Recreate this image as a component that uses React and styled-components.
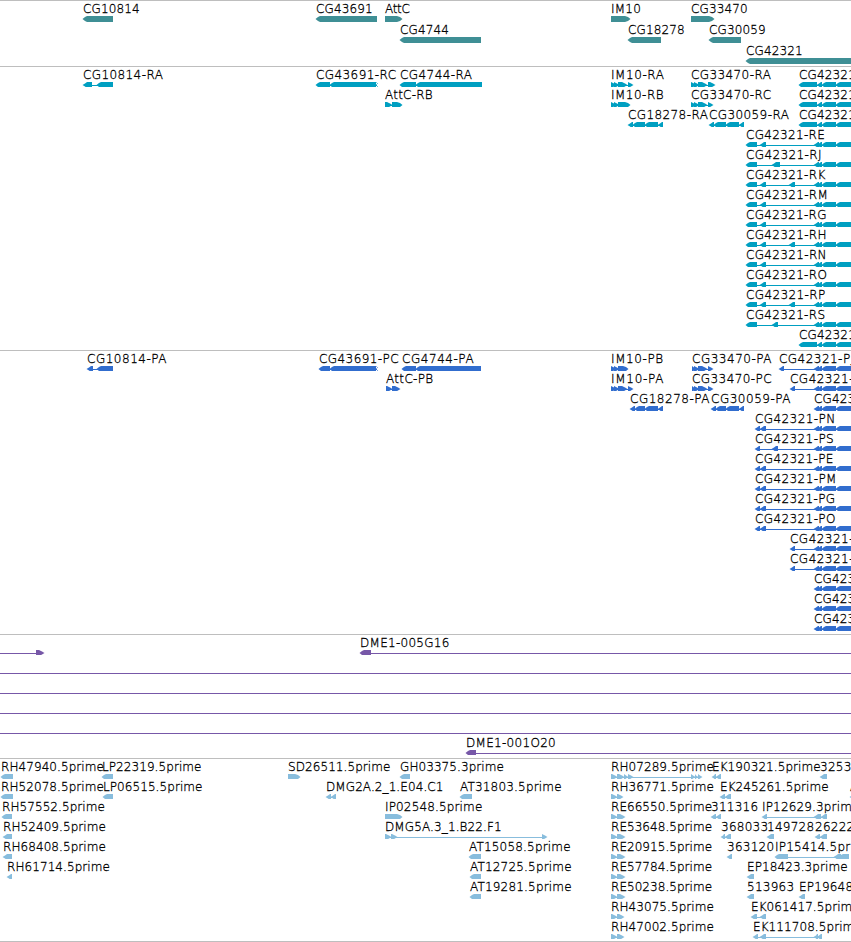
import React from "react";
import styled, { createGlobalStyle } from "styled-components";

const GlobalStyle = createGlobalStyle`
    body{
        margin:0;
        background-color:white;
        overflow:hidden;
    }
`;

const Browser = styled.main`
    width:851px;
    display:flex;
    flex-direction:column;
    overflow:hidden;
    border-bottom:1px solid #bebebe;
`;

const Track = styled.section`
    display:flex;
    flex-direction:column;
    border-top:1px solid #bebebe;
    padding-bottom:${props => props.$gap}px;
    color:${props => props.$color};
`;

const Lane = styled.svg`
    display:block;
    width:851px;
    height:${props => props.$height}px;
    fill:currentColor;
`;

const Label = styled.text`
    fill:black;
    stroke:black;
    stroke-width:0.3px;
    font-family:"DejaVu Sans", Verdana, sans-serif;
    font-size:12px;
    font-weight:200;
    white-space:pre;
`;

// advance of each character in a label, anything else counts as a digit
const advances = {
    A:8.3, B:8, C:8.5, D:9, E:7.2, F:7, G:9, H:9, I:3.8, J:4, K:7.7, L:6, M:10.3, N:9, O:9.3,
    P:7.6, R:8, S:7.5, T:7.4, "-":6.8, ".":4, "_":6, p:7.7, r:5, i:3.4, m:11.3, e:7.4, t:4
};

const labelWidth = text => [...text].reduce((sum,ch) => sum + (advances[ch] || 7.85), 0);

// short blocks are plain triangles, longer ones get a rounder head
const arrow = (start,end,forward) => {
    const head = Math.min(5, end - start);
    const bulge = end - start < 10 ? 16.4 : 16.1;
    const mirror = 36 - bulge;
    if(forward){
        return `M${start} 15H${end-head}L${end-2} ${bulge}L${end+0.5} 18L${end-2} ${mirror}L${end-head} 21H${start}Z`;
    }
    return `M${end} 15H${start+head-1}L${start+2} ${bulge}L${start-0.5} 18L${start+2} ${mirror}L${start+head-1} 21H${end}Z`;
};

// f = forward strand, r = reverse strand
const f = (label,x,...blocks) => ({label,x,blocks,forward:true});
const r = (label,x,...blocks) => ({label,x,blocks,forward:false});

const tail = [[814,819],[817,822],[822,836],[836,880]];
const longTail = [[799,817],[817,822],[822,836],[836,880]];
const rna = (name,...inner) => [r("CG42321-"+name,746,[746,757],...inner,...tail)];
const protein = (name,second=[760,766]) => [r("CG42321-"+name,755,[755,760],second,...tail)];

const genes = [
    [
        r("CG10814",83,[83,113]), r("CG43691",316,[316,377]), f("AttC",385,[385,402]),
        f("IM10",611,[611,630]), f("CG33470",691,[691,714])
    ],
    [r("CG4744",400,[400,481]), r("CG18278",628,[628,661]), r("CG30059",709,[709,741])],
    [r("CG42321",746,[746,880])]
];

const transcripts = [
    [
        r("CG10814-RA",83,[83,92],[97,113]), r("CG43691-RC",316,[316,330],[330,376],[376,377]),
        r("CG4744-RA",400,[400,416],[416,482]),
        f("IM10-RA",611,[611,616],[614,619],[618,627],[628,633]),
        f("CG33470-RA",691,[691,696],[694,699],[698,707],[708,715]),
        r("CG42321",799,...longTail)
    ],
    [
        f("AttC-RB",385,[385,392],[392,402]), f("IM10-RB",611,[611,616],[614,619],[618,630]),
        f("CG33470-RC",691,[691,696],[694,699],[698,707],[708,713]), r("CG42321",799,...longTail)
    ],
    [
        r("CG18278-RA",628,[628,633],[633,645],[645,658],[658,663]),
        r("CG30059-RA",709,[709,714],[714,726],[726,739],[739,744]), r("CG42321",799,...longTail)
    ],
    rna("RE",[760,766]),
    rna("RJ",[772,780]),
    rna("RK",[760,766],[789,795]),
    rna("RM",[760,766]),
    rna("RG",[760,766]),
    rna("RH",[760,766],[789,795]),
    rna("RN",[760,766]),
    rna("RO",[760,766]),
    rna("RP",[760,766],[789,795]),
    rna("RS",[772,778]),
    [r("CG42321",799,...longTail)]
];

const proteins = [
    [
        r("CG10814-PA",87,[87,93],[97,113]), r("CG43691-PC",319,[319,330],[330,376],[376,377]),
        r("CG4744-PA",402,[402,416],[416,481]), f("IM10-PB",611,[611,616],[614,619],[618,628]),
        f("CG33470-PA",692,[692,696],[694,699],[698,707],[708,713]),
        r("CG42321-PJ",779,[779,784],...tail)
    ],
    [
        f("AttC-PB",386,[386,392],[392,400]), f("IM10-PA",611,[611,616],[614,619],[618,627],[628,633]),
        f("CG33470-PC",692,[692,696],[694,699],[698,707],[708,713]), r("CG42321-",790,[790,795],...tail)
    ],
    [
        r("CG18278-PA",630,[630,635],[635,645],[645,658],[658,663]),
        r("CG30059-PA",711,[711,716],[716,726],[726,739],[739,744]), r("CG423",814,...tail)
    ],
    protein("PN"),
    protein("PS",[772,778]),
    protein("PE"),
    protein("PM"),
    protein("PG"),
    protein("PO"),
    [r("CG42321-",790,[790,795],...tail)],
    [r("CG42321-",790,[790,795],...tail)],
    [r("CG423",814,...tail)],
    [r("CG423",814,...tail)],
    [r("CG423",814,...tail)]
];

// blocks outside the window keep the connecting line running to the edge
const clones = [
    [f("",0,[-20,-10],[36,44]), r("DME1-005G16",360,[360,371],[870,880])],
    [f("",0,[-20,-10],[870,880])],
    [f("",0,[-20,-10],[870,880])],
    [f("",0,[-20,-10],[870,880])],
    [f("",0,[-20,-10],[870,880])],
    [r("DME1-001O20",466,[466,476],[870,880])]
];

const ests = [
    [
        r("RH47940.5prime",1,[1,13]), r("LP22319.5prime",102,[102,113]), f("SD26511.5prime",288,[288,300]),
        r("GH03375.3prime",400,[400,410]),
        f("RH07289.5prime",611,[611,617],[617,624],[624,628],[628,633],[691,695],[695,698],[698,702]),
        r("EK190321.5prime",712,[712,716],[716,721]), r("3253",820,[820,827])
    ],
    [
        r("RH52078.5prime",1,[1,13]), r("LP06515.5prime",103,[103,113]),
        r("DMG2A.2_1.E04.C1",326,[326,331],[331,336]), r("AT31803.5prime",460,[460,472]),
        f("RH36771.5prime",611,[611,617],[617,623]), r("EK245261.5prime",720,[720,725],[725,731]),
        r("A",850,[850,858])
    ],
    [
        r("RH57552.5prime",2,[2,12]), f("IP02548.5prime",385,[385,402]),
        f("RE66550.5prime",611,[611,617],[617,625]), r("311316",711,[711,716],[716,721]),
        r("IP12629.3prim",762,[762,767],[814,821],[821,827])
    ],
    [
        r("RH52409.5prime",3,[3,12]), f("DMG5A.3_1.B22.F1",385,[385,391],[391,397],[542,547]),
        f("RE53648.5prime",611,[611,617],[617,625]), r("368033",721,[721,725],[725,731]),
        r("149728",767,[767,774]), r("26222",815,[815,820],[820,827])
    ],
    [
        r("RH68408.5prime",3,[3,12]), r("AT15058.5prime",469,[469,481]),
        f("RE20915.5prime",611,[611,617],[617,625]), r("363120",727,[727,732]),
        r("IP15414.5pr",775,[775,788],[834,841],[839,849])
    ],
    [
        r("RH61714.5prime",7,[7,12]), r("AT12725.5prime",470,[470,481]),
        f("RE57784.5prime",611,[611,617],[617,625]), r("EP18423.3prime",747,[747,754])
    ],
    [
        r("AT19281.5prime",470,[470,481]), f("RE50238.5prime",611,[611,617],[617,625]),
        r("513963",747,[747,754]), r("EP19648",799,[799,805])
    ],
    [f("RH43075.5prime",611,[611,617],[617,624]), r("EK061417.5prim",751,[751,757],[760,766])],
    [f("RH47002.5prime",611,[611,617],[617,624]), r("EK111708.5prim",753,[753,758],[760,766],[814,818],[817,822])]
];

const tracks = [
    {name:"genes", color:"#3f8f95", laneHeight:21, gap:2, lanes:genes},
    {name:"transcripts", color:"#009fc1", laneHeight:20, gap:3, lanes:transcripts},
    {name:"proteins", color:"#316dce", laneHeight:20, gap:3, lanes:proteins},
    {name:"clones", color:"#7758a8", laneHeight:20, gap:3, lanes:clones},
    {name:"ests", color:"#88bddd", laneHeight:20, gap:2, lanes:ests}
];

function Feature({label,x,blocks,forward}){
    const start = blocks[0][0] + (forward ? 0 : 1);
    const end = blocks[blocks.length-1][1] - (forward ? 1 : 0);
    return(
        <g>
            <rect x={start} y={18} width={end-start} height={1} />
            {blocks.map( (block,index) => <path key={index} d={arrow(block[0],block[1],forward)} />)}
            {label && <Label x={x} y={12} textLength={labelWidth(label)}>{label}</Label>}
        </g>
    )
}

function App(){
    return(
        <>
            <GlobalStyle />
            <Browser>
                {tracks.map(track => (
                    <Track key={track.name} $color={track.color} $gap={track.gap}>
                        {track.lanes.map( (lane,index) => (
                            <Lane key={index} $height={track.laneHeight}>
                                {lane.map( (item,i) => <Feature key={i} {...item} />)}
                            </Lane>
                        ))}
                    </Track>
                ))}
            </Browser>
        </>
    )
}
export default App;
